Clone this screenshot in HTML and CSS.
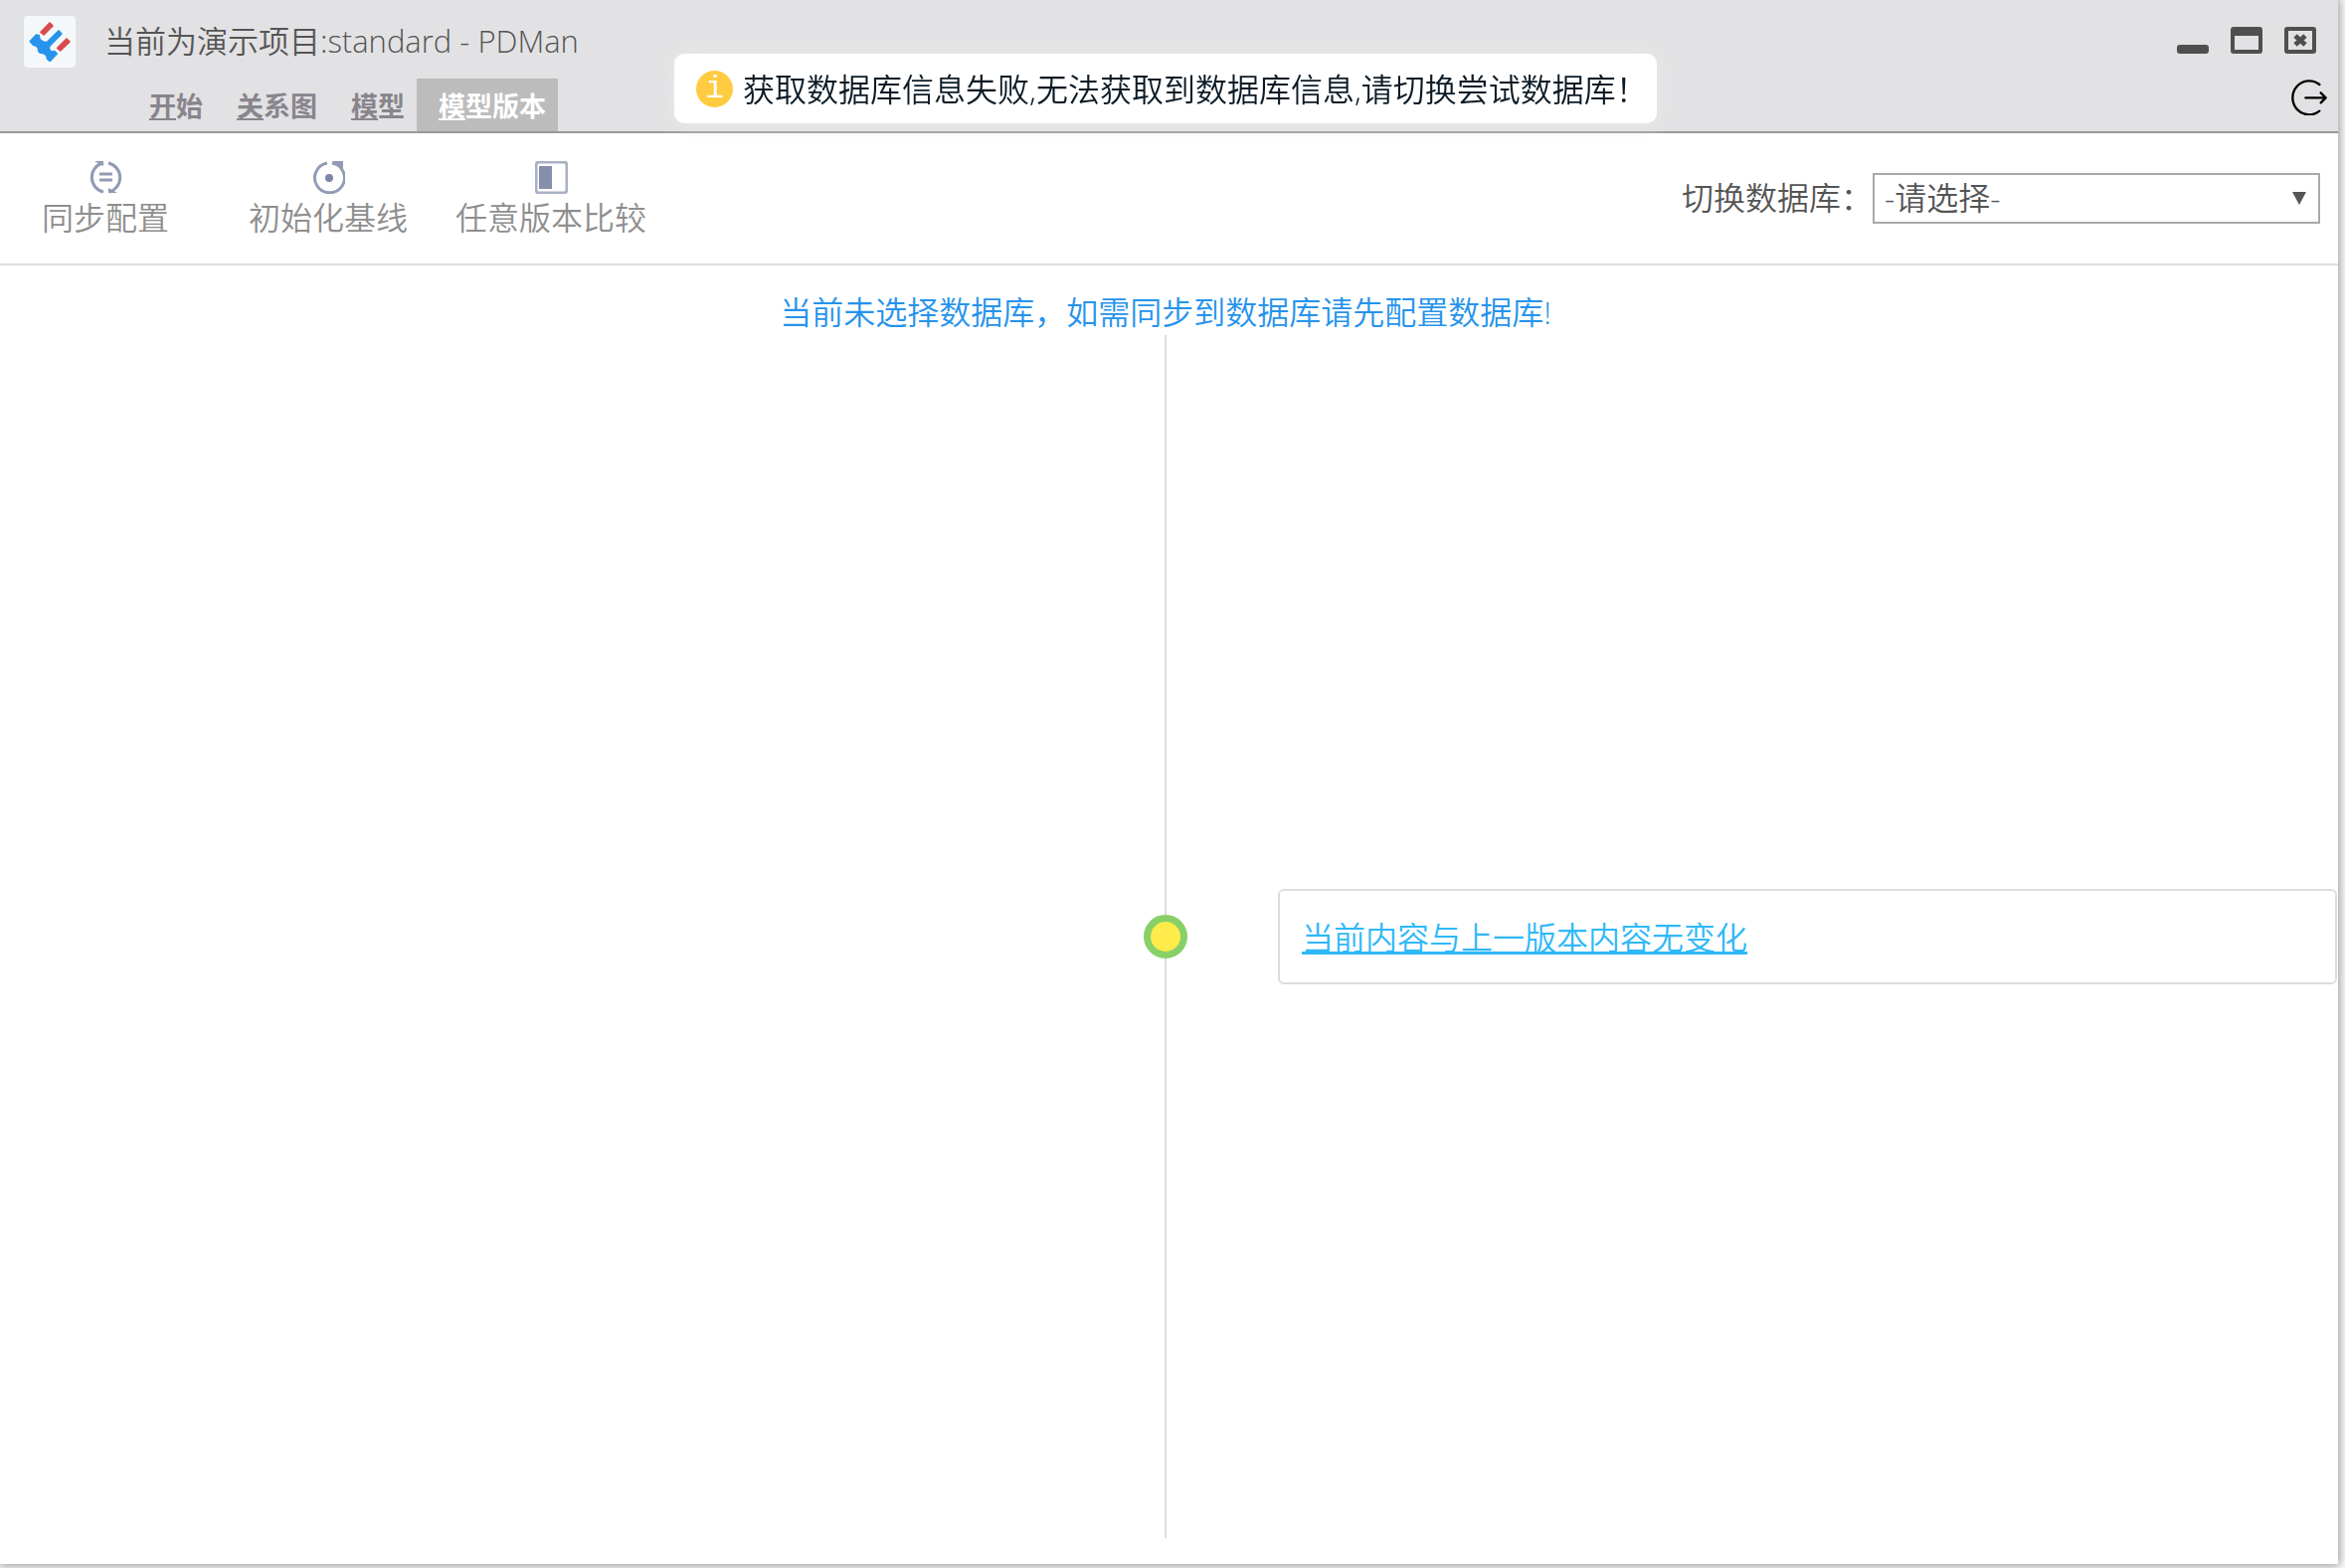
FILE: index.html
```html
<!DOCTYPE html>
<html lang="zh-CN">
<head>
<meta charset="utf-8">
<title>PDMan</title>
<link rel="stylesheet" href="styles.css">
</head>
<body>
<div class="window">
  <header class="header">
    <div class="titlebar">
      <svg class="logo" viewBox="42 33 156 156" aria-hidden="true">
        <rect x="42" y="33" width="156" height="156" rx="12" fill="#f4f8fb"/>
        <g fill="#d94c4c" stroke="#d94c4c" stroke-width="5" stroke-linejoin="round">
          <path d="M93 82 120 54 129 63 102 90Z"/>
          <path d="M143 130 171 102 180 111 152 138Z"/>
        </g>
        <path fill="#2693ec" stroke="#2693ec" stroke-width="4" stroke-linejoin="round" d="M147 77 156 87 120 124Q116 131 121 137 128 143 134 139L142 147 121 170 112 163Q112 153 106 149 99 144 91 145L85 138Q87 131 82 127 78 122 71 122L60 110 79 90 88 91Q88 100 92 105 98 111 106 112L112 112Z"/>
      </svg>
      <h1 class="title">当前为演示项目:standard - PDMan</h1>
      <div class="controls">
        <button class="control" type="button" aria-label="最小化"><svg viewBox="0 0 32 27"><rect y="18" width="32" height="9" rx="3" fill="#4f4f4f"/></svg></button>
        <button class="control" type="button" aria-label="最大化"><svg viewBox="0 0 32 27"><path fill="#4f4f4f" fill-rule="evenodd" d="M3 0H29Q32 0 32 3V24Q32 27 29 27H3Q0 27 0 24V3Q0 0 3 0ZM4 9V23H28V9Z"/></svg></button>
        <button class="control" type="button" aria-label="关闭"><svg viewBox="0 0 32 27"><rect x="2" y="2" width="28" height="23" rx="1" fill="none" stroke="#4f4f4f" stroke-width="4"/><path d="M11 9 21 18M21 9 11 18" stroke="#4f4f4f" stroke-width="5"/></svg></button>
      </div>
    </div>
    <div class="menubar">
      <nav class="tabs">
        <button class="tab" type="button"><u>开</u>始</button>
        <button class="tab" type="button"><u>关</u>系图</button>
        <button class="tab" type="button"><u>模</u>型</button>
        <button class="tab tab-active" type="button"><u>模</u>型版本</button>
      </nav>
      <button class="exit" type="button" aria-label="退出"><svg viewBox="461 240 108 108" fill="none" stroke="#000" stroke-width="7" stroke-linecap="round" stroke-linejoin="round"><path d="M546 255A50 51 0 1 0 546 335M504 295H565M550 280 565 295 550 310"/></svg></button>
    </div>
  </header>

  <div class="toolbar">
    <div class="actions">
      <button class="action" type="button">
        <svg viewBox="0 0 33 33" fill="none" stroke="#929bb3" stroke-width="3"><path d="M13 2A15 15 0 0 0 14 31M19 2A15 15 0 0 1 20 31M10 13H23M10 19H23"/><path d="M5 0H14V5ZM28 32H19V27Z" fill="#929bb3" stroke="none"/></svg>
        <span>同步配置</span>
      </button>
      <button class="action" type="button">
        <svg viewBox="0 0 33 33" fill="none" stroke="#929bb3" stroke-width="3"><path d="M15 2A15 15 0 1 0 20 2"/><circle cx="17" cy="17" r="4" fill="#7c86a3" stroke="none"/><path d="M20 0H31V9Z" fill="#929bb3" stroke="none"/></svg>
        <span>初始化基线</span>
      </button>
      <button class="action" type="button">
        <svg viewBox="0 0 33 33"><rect x="1" y="1" width="31" height="31" rx="3" fill="#fff" stroke="#a9b1c5" stroke-width="3"/><path d="M4 5H17V28H4Z" fill="#858fab"/></svg>
        <span>任意版本比较</span>
      </button>
    </div>
    <div class="database">
      <label for="db">切换数据库：</label>
      <div class="select-wrap">
        <select id="db" class="select"><option>-请选择-</option></select>
        <svg class="arrow" viewBox="0 0 14 13" aria-hidden="true"><path d="M0 0H14L7 13Z" fill="#555"/></svg>
      </div>
    </div>
  </div>

  <main class="main">
    <p class="notice">当前未选择数据库，如需同步到数据库请先配置数据库!</p>
    <section class="timeline">
      <div class="axis"><span class="dot"></span></div>
      <article class="card"><a href="#">当前内容与上一版本内容无变化</a></article>
    </section>
  </main>
</div>

<div class="toast" role="alert"><span class="toast-icon">i</span><span class="toast-text">获取数据库信息失败,无法获取到数据库信息,请切换尝试数据库！</span></div>
</body>
</html>
```
FILE: styles.css
```css
* { box-sizing: border-box; }

body {
  margin: 0;
  background: #fff;
  color: #555;
  font-family: "Open Sans", "Noto Sans CJK SC", sans-serif;
  font-size: 32px;
  font-weight: 350;
  line-height: 42px;
  overflow: hidden;
}

button, select {
  margin: 0;
  padding: 0;
  border: 0;
  background: none;
  color: inherit;
  font: inherit;
}

svg { display: block; }

.window {
  display: flex;
  flex-direction: column;
  min-height: calc(100vh - 4px);
  margin: 0 7px 4px 0;
  background: #fff;
  box-shadow: 0 0 10px 2px #999;
}

.header {
  background: #e2e2e4;
  border-bottom: 2px solid #999;
}

.titlebar {
  display: flex;
  align-items: center;
  padding: 16px 22px 11px 24px;
}

.logo { width: 52px; height: 52px; }

.title {
  margin: 0 auto 0 29px;
  padding-bottom: 3px;
  font-size: 31px;
  font-weight: 350;
}

.controls { display: flex; gap: 22px; padding-bottom: 3px; }
.control svg { width: 32px; height: 27px; }

.menubar {
  display: flex;
  align-items: flex-start;
  justify-content: space-between;
  padding: 0 11px 0 128px;
}

.tabs { display: flex; }

.tab {
  height: 53px;
  padding: 3px 12px 0 22px;
  color: #88858c;
  font-size: 27px;
  font-weight: 700;
}

.tab-active { background: #bcbcbc; color: #fff; }

.exit { padding-top: 1px; }
.exit svg { width: 36px; height: 36px; }

.toolbar {
  display: flex;
  align-items: center;
  justify-content: space-between;
  padding: 24px 18px 25px 11px;
  border-bottom: 2px solid #ddd;
}

.actions { display: flex; gap: 34px; }

.action {
  display: flex;
  flex-direction: column;
  align-items: center;
  gap: 3px;
  width: 190px;
  padding-top: 4px;
  color: #8e8e8e;
  white-space: nowrap;
}

.action svg { width: 33px; height: 33px; }

.database { display: flex; align-items: center; }

.select-wrap { position: relative; }

.select {
  display: block;
  width: 450px;
  height: 51px;
  padding: 0 10px;
  border: 2px solid #a9a9a9;
  background: #fff;
  appearance: none;
}

.arrow {
  position: absolute;
  top: 19px;
  right: 14px;
  width: 14px;
  height: 13px;
  pointer-events: none;
}

.main {
  display: flex;
  flex: 1;
  flex-direction: column;
  padding: 26px 0;
}

.notice {
  margin: 0 7px 2px 0;
  color: #2693ec;
  text-align: center;
}

.timeline {
  display: grid;
  flex: 1;
  grid-template-columns: minmax(0, 1149fr) 46px minmax(0, 1155fr);
  align-items: center;
  padding-right: 1px;
}

.axis {
  display: flex;
  grid-column: 2;
  align-items: center;
  align-self: stretch;
  justify-content: center;
  background: linear-gradient(#ddd, #ddd) center / 2px 100% no-repeat;
}

.dot {
  width: 44px;
  height: 44px;
  border: 7px solid #88d068;
  border-radius: 50%;
  background: #ffec4b;
}

.card {
  margin-left: 90px;
  padding: 26px 22px 24px;
  border: 2px solid #ddd;
  border-radius: 6px;
}

.card a { color: #2fb8f8; text-underline-offset: 2px; text-decoration-skip-ink: none; }

.toast {
  position: fixed;
  top: 54px;
  right: 14px;
  left: 0;
  display: flex;
  align-items: center;
  gap: 10px;
  width: fit-content;
  min-width: 988px;
  height: 70px;
  margin: 0 auto;
  padding: 0 6px 0 22px;
  border-radius: 10px;
  background: #fff;
  box-shadow: 0 0 20px #eaeaea;
  color: #0b1a25;
}

.toast-text { padding-top: 2px; }

.toast-icon {
  width: 37px;
  height: 37px;
  border-radius: 50%;
  background: #ffcb40;
  color: #fff;
  font-family: "Liberation Mono", monospace;
  line-height: 37px;
  text-align: center;
}
```
